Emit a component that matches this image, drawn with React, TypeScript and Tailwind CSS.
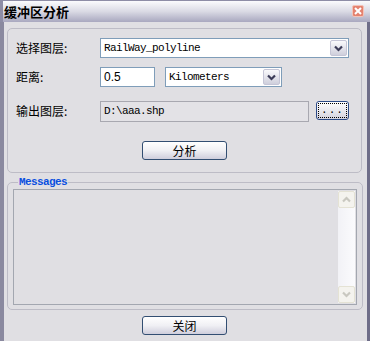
import React from "react";

const cjk = "font-['SimSun','Noto_Sans_CJK_SC',sans-serif]";
const mono = "font-['Liberation_Mono',monospace] text-[11px] tracking-[-0.6px]";

function Chevron({ color = "#3c3c58" }: { color?: string }) {
  return (
    <svg width="9" height="7" viewBox="0 0 9 7">
      <path d="M1 1.5 L4.5 5 L8 1.5" fill="none" stroke={color} strokeWidth="2.2" />
    </svg>
  );
}

function DropButton() {
  return (
    <div className="w-[17px] flex items-center justify-center rounded-[2px] border border-[#c5c5d6] bg-gradient-to-b from-[#fafafc] to-[#cfcfdc]">
      <Chevron />
    </div>
  );
}

function Combo({ value, width }: { value: string; width: string }) {
  return (
    <div className={`${width} h-[20px] flex border border-[#7f9db9] bg-white p-[1px]`}>
      <div className={`flex-1 flex items-center pl-[2px] text-black ${mono}`}>{value}</div>
      <DropButton />
    </div>
  );
}

function XpButton({ label }: { label: string }) {
  return (
    <div className="w-[85px] h-[19px] rounded-[3px] border border-[#324e72] bg-gradient-to-b from-[#ffffff] via-[#f0f0f4] to-[#cfcedc] flex items-center justify-center">
      <span className={`${cjk} text-[12px] text-black leading-none`}>{label}</span>
    </div>
  );
}

function ScrollArrow({ up }: { up?: boolean }) {
  return (
    <div className="h-[17px] flex items-center justify-center rounded-[2px] border border-[#e4e2d4] bg-[#f4f3ee]">
      <div className={up ? "rotate-180" : ""}>
        <Chevron color="#c9c8c0" />
      </div>
    </div>
  );
}

export default function App() {
  return (
    <div className="w-[370px] h-[341px] flex flex-col bg-[#e0dfe3] overflow-hidden">
      {/* title bar */}
      <div className="h-[22px] flex items-center justify-between pl-[1px] pr-[6px] border-t border-l-[3px] border-[#8e8da6] bg-gradient-to-b from-[#fbfbfd] via-[#dadae4] to-[#a9a8bf]">
        <span className={`${cjk} text-[13px] font-bold text-black leading-none`}>缓冲区分析</span>
        <div className="w-[12px] h-[12px] mb-[2px] flex items-center justify-center rounded-[2px] border border-[#f3c3b8] bg-[#e4826f]">
          <svg width="8" height="8" viewBox="0 0 8 8">
            <path d="M1 1 L7 7 M7 1 L1 7" stroke="white" strokeWidth="2" />
          </svg>
        </div>
      </div>

      {/* body */}
      <div className="flex-1 flex flex-col border-l-[4px] border-l-[#8a899f] border-r-[3px] border-r-[#6e6d88] pl-[3px] pr-[1px] pt-[6px]">
        {/* parameters group */}
        <div className="w-[355px] h-[145px] rounded-[5px] border border-[#bdbcc6] pl-[8px] pt-[9px] flex flex-col">
          <div className="flex items-center h-[20px]">
            <span className={`${cjk} w-[84px] text-[12px] text-black`}>选择图层:</span>
            <Combo value="RailWay_polyline" width="w-[249px]" />
          </div>
          <div className="flex items-center h-[20px] mt-[9px]">
            <span className={`${cjk} w-[84px] text-[12px] text-black`}>距离:</span>
            <div className="w-[55px] h-[20px] border border-[#7f9db9] bg-white flex items-center pl-[3px]">
              <span className="font-['Liberation_Sans',sans-serif] text-[12px] text-black">0.5</span>
            </div>
            <div className="ml-[10px]">
              <Combo value="Kilometers" width="w-[117px]" />
            </div>
          </div>
          <div className="flex items-center h-[22px] mt-[13px]">
            <span className={`${cjk} w-[84px] text-[12px] text-black`}>输出图层:</span>
            <div className={`w-[209px] h-[21px] border border-[#a8a8b0] bg-[#e3e2e6] flex items-center pl-[3px] text-black ${mono}`}>
              D:\aaa.shp
            </div>
            <div className="ml-[7px] mb-[2px] w-[33px] h-[19px] rounded-[3px] border border-[#2c4a86] bg-gradient-to-b from-[#ffffff] to-[#d3d2de] p-[1px]">
              <div className="w-full h-full border border-dotted border-black flex items-end justify-center pb-[1px]">
                <span className="font-['Liberation_Mono',monospace] text-[11px] leading-none tracking-[1px] text-black">...</span>
              </div>
            </div>
          </div>
          <div className="mt-[19px] pl-[126px]">
            <XpButton label="分析" />
          </div>
        </div>

        {/* messages group */}
        <fieldset className="w-[356px] h-[134px] mt-[3px] rounded-[5px] border border-[#bdbcc6] px-[5px] pb-[4px]">
          <legend className="ml-[5px] px-[1px] font-['Liberation_Mono',monospace] text-[11px] font-bold leading-[12px] text-[#0a4fe0] tracking-[-0.6px]">
            Messages
          </legend>
          <div className="h-[116px] mt-[1px] border border-[#a3a7b0] bg-[#e0dfe3] flex justify-end pr-[1px] py-[1px]">
            <div className="w-[17px] flex flex-col justify-between bg-gradient-to-r from-[#f2f2f6] to-[#fbfbfd]">
              <ScrollArrow up />
              <ScrollArrow />
            </div>
          </div>
        </fieldset>

        <div className="mt-[6px] pl-[135px]">
          <XpButton label="关闭" />
        </div>
      </div>
    </div>
  );
}
